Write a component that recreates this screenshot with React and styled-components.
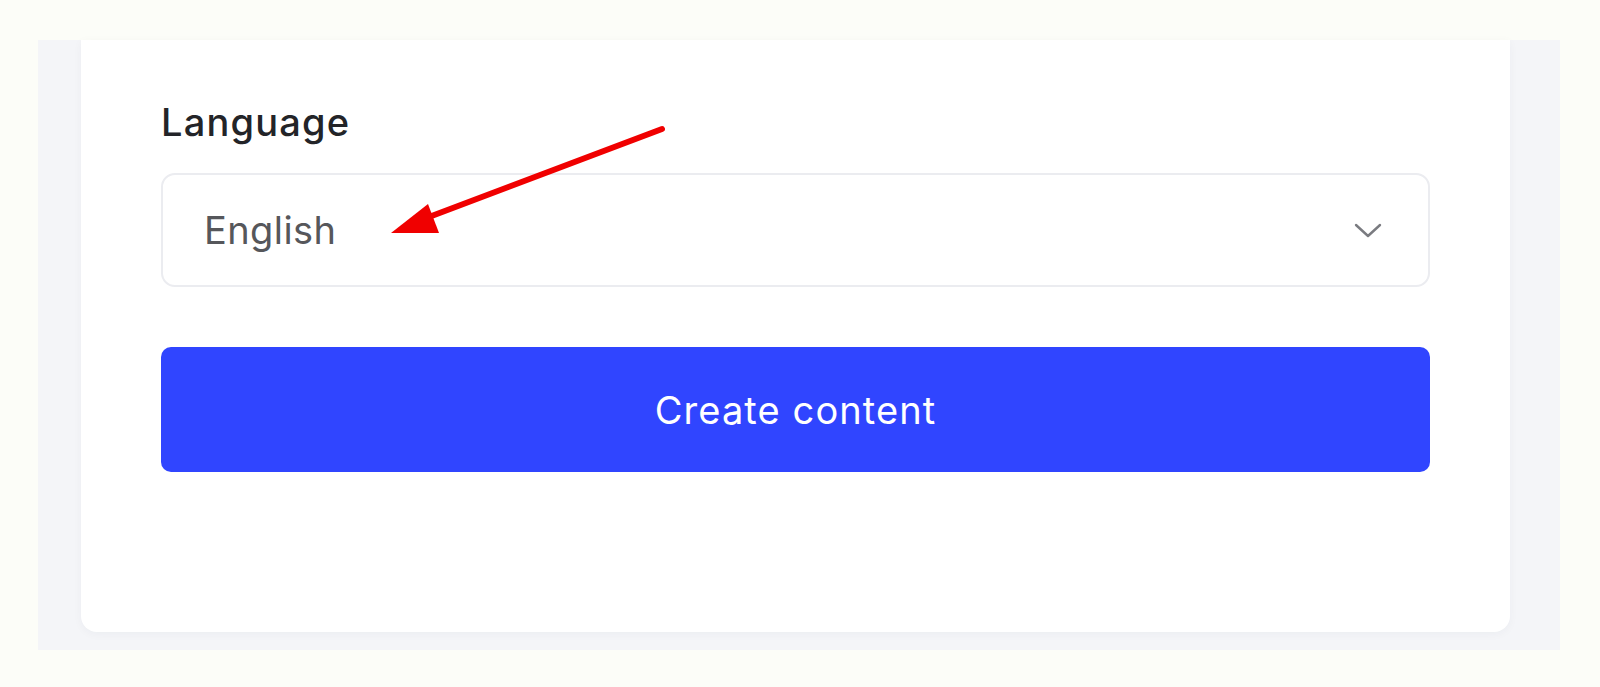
import React from 'react'
import styled, { createGlobalStyle } from 'styled-components'

const GlobalStyle = createGlobalStyle`
  html, body {
    margin: 0;
    padding: 0;
    background: #fcfdf8;
    font-family: Inter, "Noto Sans", sans-serif;
  }
`

const Page = styled.div`
  width: 1600px;
  height: 687px;
  padding-top: 40px;
  box-sizing: border-box;
`

const Panel = styled.div`
  margin-left: 38px;
  width: 1522px;
  height: 610px;
  box-sizing: border-box;
  padding: 0 50px 18px 43px;
  background: #f4f5f8;
`

const Card = styled.div`
  position: relative;
  height: 100%;
  box-sizing: border-box;
  padding: 59px 80px 0 80px;
  background: #ffffff;
  border-radius: 0 0 16px 16px;
  box-shadow: 0 2px 10px rgba(30, 40, 80, 0.04);
`

const Label = styled.div`
  font-size: 38px;
  font-weight: 500;
  color: #232428;
  line-height: 46px;
  letter-spacing: 1.2px;
  margin-bottom: 28px;
`

const Select = styled.div`
  display: flex;
  align-items: center;
  justify-content: space-between;
  height: 114px;
  box-sizing: border-box;
  padding: 0 46px 0 41px;
  border: 2px solid #ebecf0;
  border-radius: 14px;
  font-size: 38px;
  letter-spacing: 0.4px;
  color: #56575b;
  margin-bottom: 60px;
`

const Chevron = styled.svg`
  width: 28px;
  height: 16px;
  margin-top: 2px;
`

const Button = styled.button`
  display: flex;
  align-items: center;
  justify-content: center;
  width: 100%;
  height: 125px;
  border: none;
  border-radius: 10px;
  background: #3045ff;
  color: #ffffff;
  font-family: Inter, "Noto Sans", sans-serif;
  font-size: 38px;
  font-weight: 400;
  letter-spacing: 1.1px;
  cursor: pointer;
`

const Arrow = styled.svg`
  position: absolute;
  left: 0;
  top: 0;
  width: 700px;
  height: 260px;
  pointer-events: none;
`

export default function App() {
  return (
    <Page>
      <GlobalStyle />
      <Panel>
        <Card>
          <Label>Language</Label>
          <Select>
            <span>English</span>
            <Chevron viewBox="0 0 28 16" fill="none">
              <path d="M2 2 L14 13 L26 2" stroke="#7a7b80" strokeWidth="2.4" strokeLinecap="round" strokeLinejoin="round" />
            </Chevron>
          </Select>
          <Button>Create content</Button>
          <Arrow viewBox="0 0 700 260">
            <line x1="581" y1="89" x2="340" y2="180" stroke="#f00000" strokeWidth="6" strokeLinecap="round" />
            <polygon points="310,193 347,164 358,193" fill="#f00000" />
          </Arrow>
        </Card>
      </Panel>
    </Page>
  )
}
